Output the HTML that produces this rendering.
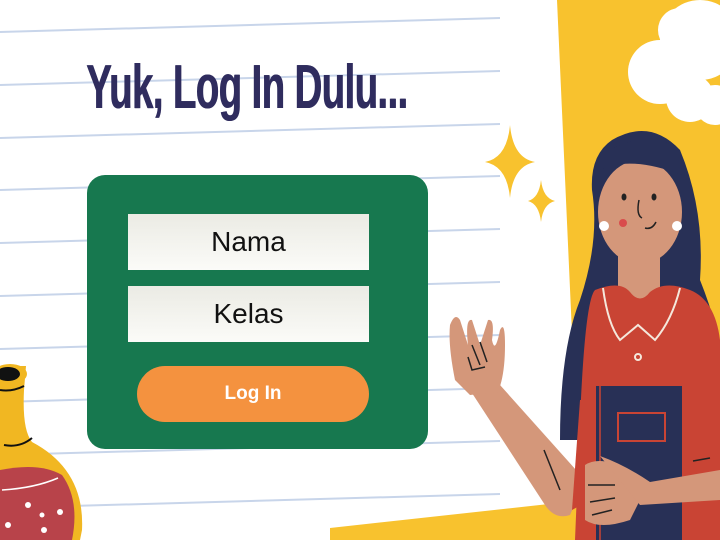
<!DOCTYPE html>
<html><head><meta charset="utf-8"><style>
html,body{margin:0;padding:0;width:720px;height:540px;overflow:hidden;background:#fff}
.t{position:absolute;left:86px;top:52px;font-family:"Liberation Sans Narrow","Liberation Sans",sans-serif;font-weight:bold;font-size:62px;color:#2f2c5e;letter-spacing:-1px;transform:scaleX(0.62);transform-origin:left top;white-space:nowrap;text-shadow:1px 0 #2f2c5e}
.box{position:absolute;left:87px;top:175px;width:341px;height:274px;background:#17784f;border-radius:18px}
.in{position:absolute;left:41px;width:241px;height:56px;background:linear-gradient(#ebebe4,#fbfbf8);font-family:"Liberation Sans",sans-serif;font-size:28px;color:#111;text-align:center;line-height:56px}
.btn{position:absolute;left:50px;top:191px;width:232px;height:56px;background:#f4923f;border-radius:28px;color:#fff;font-family:"Liberation Sans",sans-serif;font-weight:bold;font-size:19px;text-align:center;line-height:56px}
</style></head><body>
<svg width="720" height="540" style="position:absolute;left:0;top:0">
<g stroke="#c8d5ea" stroke-width="2">
<line x1="0" y1="32" x2="500" y2="18"/><line x1="0" y1="85" x2="500" y2="71"/><line x1="0" y1="138" x2="500" y2="124"/><line x1="0" y1="190" x2="500" y2="176"/><line x1="0" y1="243" x2="500" y2="229"/><line x1="0" y1="296" x2="500" y2="282"/><line x1="0" y1="349" x2="500" y2="335"/><line x1="0" y1="402" x2="500" y2="388"/><line x1="0" y1="455" x2="500" y2="441"/><line x1="0" y1="508" x2="500" y2="494"/>
</g>
<path d="M557 0 L720 0 L720 540 L330 540 L330 528 L585 500 L575 400 Z" fill="#f8c22e"/>
<g fill="#fff"><circle cx="660" cy="72" r="32"/><circle cx="700" cy="40" r="40"/><circle cx="690" cy="98" r="24"/><circle cx="715" cy="105" r="20"/><circle cx="680" cy="30" r="22"/></g>
<g fill="#f8c22e"><path d="M510 125 Q513 158 535 162 Q513 166 510 198 Q507 166 485 162 Q507 158 510 125Z"/><path d="M541 180 Q543 198 555 201 Q543 204 541 222 Q539 204 528 201 Q539 198 541 180Z"/></g>
<!-- bottle -->
<path d="M0 366 L26 366 L24 390 Q22 430 32 442 Q85 470 82 530 L80 540 L0 540Z" fill="#f1b722"/>
<ellipse cx="10" cy="374" rx="17" ry="10" fill="#f1b722"/><ellipse cx="8" cy="374" rx="12" ry="7" fill="#111"/>
<path d="M0 390 Q12 392 24 386 M4 445 Q20 448 32 438" stroke="#111" stroke-width="2" fill="none"/>
<path d="M0 470 Q40 462 62 475 Q80 500 72 540 L0 540Z" fill="#b8434a"/>
<path d="M2 490 Q35 488 58 478" stroke="#fff" stroke-width="1.5" fill="none"/>
<g fill="#fff"><circle cx="28" cy="505" r="3"/><circle cx="42" cy="515" r="2.5"/><circle cx="60" cy="512" r="3"/><circle cx="8" cy="525" r="3"/><circle cx="44" cy="530" r="3"/></g>
<!-- girl -->
<path d="M612 140 Q650 118 680 150 Q705 210 700 280 Q720 330 720 360 L720 440 L560 440 Q560 350 580 300 Q600 240 592 190 Q590 155 612 140Z" fill="#283056"/>
<rect x="618" y="245" width="42" height="60" fill="#d4977a"/>
<ellipse cx="640" cy="212" rx="42" ry="52" fill="#d4977a"/>
<path d="M600 170 Q630 155 682 175 L680 150 Q650 128 610 150Z" fill="#283056"/>
<circle cx="604" cy="226" r="5" fill="#fff"/><circle cx="677" cy="226" r="5" fill="#fff"/>
<circle cx="623" cy="223" r="4" fill="#d94c4c"/>
<ellipse cx="624" cy="197" rx="2.5" ry="3.5" fill="#222"/><ellipse cx="654" cy="197" rx="2.5" ry="3.5" fill="#222"/>
<path d="M639 200 Q636 215 642 218 M645 228 Q652 230 656 222" stroke="#222" stroke-width="1.5" fill="none"/>
<path d="M595 290 Q620 280 630 292 Q640 305 650 292 Q665 280 690 290 Q715 300 720 340 L720 540 L575 540 L580 420 Q585 300 595 290Z" fill="#c94434"/>
<path d="M603 288 Q608 325 620 340 L638 325 L655 340 Q672 320 680 288" stroke="#f5e8dc" stroke-width="2" fill="none"/>
<circle cx="638" cy="357" r="3" stroke="#f5e8dc" stroke-width="2" fill="none"/>
<path d="M470 390 L500 385 L585 480 L570 515 Q555 520 545 505Z" fill="#d4977a"/>
<path d="M455 380 Q448 345 450 325 Q455 312 460 320 L468 345 Q465 318 472 320 L480 345 L488 320 Q495 318 492 340 Q495 355 500 330 Q505 320 505 345 Q505 375 498 392 L470 395Z" fill="#d4977a"/>
<path d="M468 357 L472 370 L485 367 M472 345 L480 365 M480 342 L487 362" stroke="#222" stroke-width="1.5" fill="none"/>
<path d="M580 400 L598 400 L590 500 L572 510Z" fill="#c94434"/>
<rect x="596" y="386" width="86" height="154" fill="#283056"/>
<line x1="600" y1="386" x2="600" y2="540" stroke="#c94434" stroke-width="1.5"/>
<rect x="618" y="413" width="47" height="28" fill="none" stroke="#c94434" stroke-width="2"/>
<path d="M585 465 Q600 455 630 470 L645 490 Q650 500 640 500 L630 520 Q600 530 585 520Z" fill="#d4977a"/>
<path d="M600 456 Q625 465 650 482 L720 470 L720 500 L640 505Z" fill="#d4977a"/>
<path d="M588 485 L615 485 M590 502 L615 498 M592 515 L612 510 M693 461 L710 458" stroke="#222" stroke-width="1.5"/>
<path d="M544 450 L560 490" stroke="#222" stroke-width="1.5"/>
</svg>
<div class="t">Yuk, Log In Dulu...</div>
<div class="box">
<div class="in" style="top:39px">Nama</div>
<div class="in" style="top:111px">Kelas</div>
<div class="btn">Log In</div>
</div>
</body></html>
